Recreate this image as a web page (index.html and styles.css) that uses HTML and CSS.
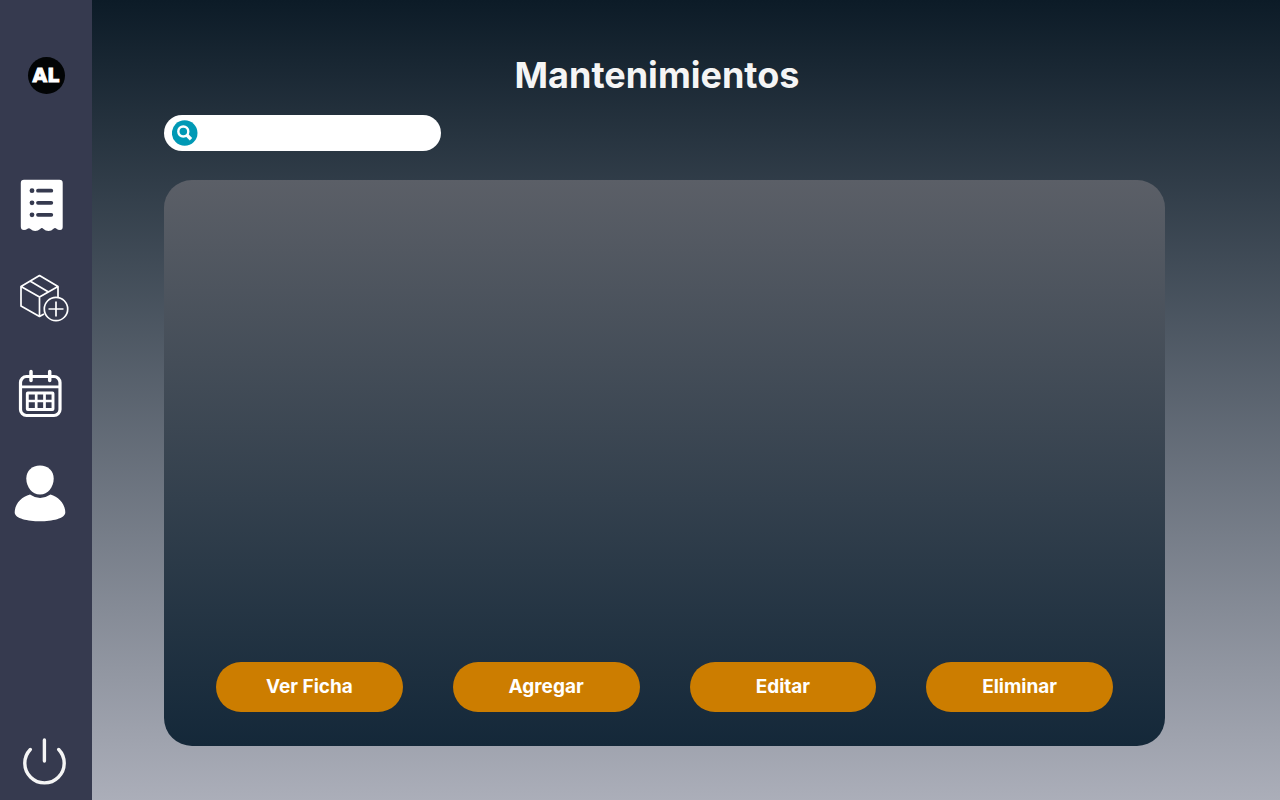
FILE: index.html
```html
<!DOCTYPE html>
<html lang="es">
<head>
<meta charset="utf-8">
<meta name="viewport" content="width=device-width, initial-scale=1">
<title>Mantenimientos</title>
<link rel="stylesheet" href="styles.css">
</head>
<body>
<div class="app">
  <nav class="sidebar" aria-label="Principal">
    <a class="logo" href="#"><span class="logo-text">AL</span></a>
    <div class="menu">
      <a class="nav-link" href="#" aria-label="Fichas">
        <svg class="icon" width="92" height="80" viewBox="0 0 92 80">
          <path fill="#fff" d="M24 14.800H59.500Q62.700 14.800 62.700 18V62Q62.700 65 60 65Q57.800 65 56.500 63.700Q55 62.500 53.500 63.700Q51.500 66 48.500 66Q45.500 66 43.500 64Q41.800 62.200 40.200 64Q38 66 35.200 66Q32.500 66 30.500 63.900Q29 62.500 27.500 63.700Q26 65 24 65Q20.800 65 20.800 61.500V18Q20.800 14.800 24 14.800Z"/>
          <g fill="#363a4f"><circle cx="32" cy="25.700" r="2.400"/><circle cx="32" cy="37.800" r="2.400"/><circle cx="32" cy="49.800" r="2.400"/></g>
          <path stroke="#363a4f" stroke-width="3.800" stroke-linecap="round" d="M38 25.700H51.300M38 37.800H51.300M38 49.800H51.300"/>
        </svg>
      </a>
      <a class="nav-link" href="#" aria-label="Agregar producto">
        <svg class="icon" width="92" height="80" viewBox="0 5 92 80" fill="none" stroke="#fff" stroke-width="1.700" stroke-linejoin="round">
          <path d="M44 59L39.500 61.500L21 51V31.500L39.500 20.500L58 31.500V42.500M21 31.500L39.500 42L58 31.500M39.500 42V61.500M30 26L48.500 37"/>
          <circle cx="56" cy="54" r="11.700"/><path d="M56 46.500V61.500M48.500 54H63.500"/>
        </svg>
      </a>
      <a class="nav-link" href="#" aria-label="Calendario">
        <svg class="icon" width="92" height="80" viewBox="0 5 92 80" fill="none" stroke="#fff">
          <rect x="20.500" y="26.500" width="39.500" height="39" rx="6" stroke-width="3.200"/>
          <path stroke-width="2.700" d="M20.500 36.800H60"/>
          <path stroke-width="3.500" stroke-linecap="round" d="M31 21.500V30.500M49.700 21.500V30.500"/>
          <rect x="27.300" y="43" width="25.700" height="16.500" rx=".5" stroke-width="2.900"/>
          <path stroke-width="2.700" d="M36.200 43V59.500M44.500 43V59.500M27.300 51H53"/>
        </svg>
      </a>
      <a class="nav-link" href="#" aria-label="Usuario">
        <svg class="icon" width="92" height="80" viewBox="0 0 92 80" fill="#fff">
          <path d="M40 15.600C48 15.600 53.700 21 53.700 28.500C53.700 37 48 44.500 40 44.500S26.300 37 26.300 28.500C26.300 21 32 15.600 40 15.600Z"/>
          <path d="M30 44.500Q40 51.500 50.500 44.500C58.500 46.500 65.300 54 65.300 62.500C65.300 68.500 52 71.300 40 71.300S14.700 68.500 14.700 62.500C14.700 54 21.500 46.500 30 44.500Z"/>
        </svg>
      </a>
    </div>
    <button class="power" type="button" aria-label="Salir">
      <svg class="icon" width="92" height="72" viewBox="0 0 92 72" fill="none" stroke="#f5f5f5" stroke-width="3.400" stroke-linecap="round">
        <path d="M44.400 13V34M30.300 22.500A19.700 19.700 0 1 0 58.700 22.500"/>
      </svg>
    </button>
  </nav>
  <main class="main">
    <h1 class="title">Mantenimientos</h1>
    <form class="search">
      <button class="search-button" type="button" aria-label="Buscar">
        <svg class="icon" width="26" height="26" viewBox="0 0 26 26" fill="none" stroke="#fff">
          <circle cx="12.700" cy="13" r="12.800" fill="#0099b5" stroke="none"/>
          <circle cx="11.300" cy="11.500" r="5" stroke-width="2.400"/><path stroke-width="3.400" d="M14.800 15L19 19.200"/>
        </svg>
      </button>
      <input class="search-input" type="text" aria-label="Buscar mantenimientos">
    </form>
    <section class="panel" aria-label="Mantenimientos">
      <div class="actions">
        <button class="action" type="button">Ver Ficha</button>
        <button class="action" type="button">Agregar</button>
        <button class="action" type="button">Editar</button>
        <button class="action" type="button">Eliminar</button>
      </div>
    </section>
  </main>
</div>
</body>
</html>
```
FILE: styles.css
```css
* { box-sizing: border-box; }

body {
  margin: 0;
  font-family: Inter, "Liberation Sans", sans-serif;
}

.app {
  display: flex;
  min-height: 100vh;
  background: linear-gradient(#0c1b27, #abaeb9);
}

.sidebar {
  display: flex;
  flex-direction: column;
  flex: none;
  width: 92px;
  padding: 57px 0 1px;
  background: #363a4f;
}

.logo {
  display: flex;
  align-items: center;
  justify-content: center;
  align-self: center;
  width: 37px;
  height: 37px;
  border-radius: 50%;
  background: #020405;
  color: #fff;
  text-decoration: none;
}

.logo-text {
  font-family: "DejaVu Sans", sans-serif;
  font-size: 19px;
  font-weight: 700;
  line-height: 19px;
  -webkit-text-stroke: 1px #fff;
}

.menu {
  display: flex;
  flex-direction: column;
  gap: 15px;
  margin-top: 71px;
}

.nav-link,
.icon { display: block; }

.power {
  margin-top: auto;
  padding: 0;
  border: 0;
  background: none;
  cursor: pointer;
}

.main {
  display: flex;
  flex: 1;
  flex-direction: column;
  min-width: 0;
  padding: 51px 115px 54px 72px;
}

.title {
  align-self: center;
  margin: 0 15px 16px 0;
  color: #f5f5f5;
  font-size: 36px;
  font-weight: 700;
  line-height: 48px;
}

.search {
  display: flex;
  align-items: center;
  gap: 8px;
  width: 277px;
  max-width: 100%;
  height: 36px;
  margin-bottom: 29px;
  padding: 0 16px 0 8px;
  border-radius: 18px;
  background: #fff;
}

.search-button {
  flex: none;
  padding: 0;
  border: 0;
  background: none;
  cursor: pointer;
}

.search-input {
  flex: 1;
  min-width: 0;
  padding: 0;
  border: 0;
  outline: 0;
  background: none;
  font: inherit;
}

.panel {
  display: flex;
  flex: 1;
  flex-direction: column;
  justify-content: flex-end;
  padding: 34px 52px;
  border-radius: 28px;
  background: linear-gradient(#5b5f67, #142839);
}

.actions {
  display: grid;
  grid-template-columns: repeat(auto-fit, minmax(160px, 1fr));
  gap: 24px 50px;
}

.action {
  height: 50px;
  padding: 0 16px;
  border: 0;
  border-radius: 25px;
  background: #cc7d00;
  color: #fff;
  font-family: inherit;
  font-size: 19px;
  font-weight: 700;
  line-height: 24px;
  cursor: pointer;
}
```
